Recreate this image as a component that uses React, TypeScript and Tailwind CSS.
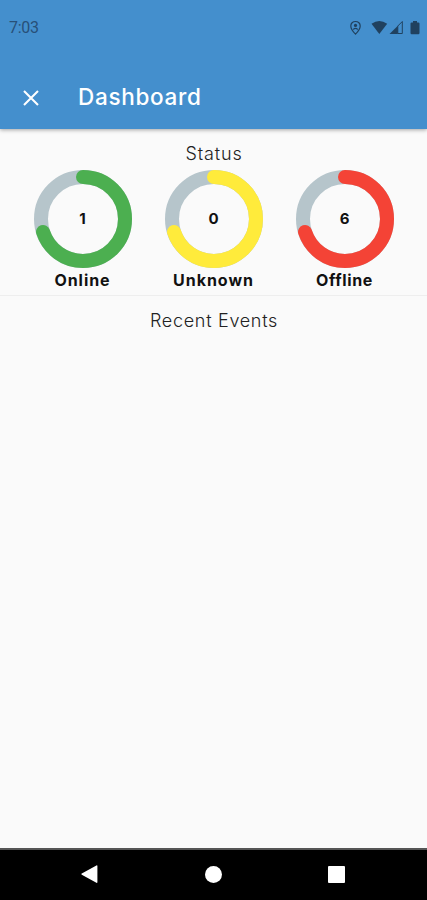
import type { ReactNode } from 'react';

type StatusRingProps = {
  label: string;
  count: number;
  percent: number;
  strokeClass: string;
  labelClass: string;
};

const StatusRing = (props: StatusRingProps) => (
  <div className="flex w-[131px] flex-col items-center">
    <div className="grid h-[98px] w-[98px] place-items-center">
      <svg className="col-start-1 row-start-1 -rotate-90" width="98" height="98">
        <circle
          className="stroke-[#b6c5cb]"
          cx="49"
          cy="49"
          r="42"
          fill="none"
          strokeWidth="14"
        />
        <circle
          className={props.strokeClass}
          cx="49"
          cy="49"
          r="42"
          fill="none"
          strokeWidth="14"
          strokeLinecap="round"
          pathLength={100}
          strokeDasharray={`${props.percent} 100`}
        />
      </svg>
      <span className="col-start-1 row-start-1 text-[15px] leading-5 font-bold text-[#111111]">
        {props.count}
      </span>
    </div>
    <span
      className={`mt-[2px] text-base leading-5 font-bold text-[#111111] ${props.labelClass}`}
    >
      {props.label}
    </span>
  </div>
);

const StatusBar = () => (
  <div className="flex h-14 items-center justify-between pr-[7px] pl-[9px] text-[#20415f]">
    <span className="font-[Roboto,sans-serif] text-base leading-5 tracking-[-0.3px] text-[#285078]">
      7:03
    </span>
    <svg width="72" height="18" viewBox="0 0 72 18" fill="currentColor">
      {/* Location */}
      <path
        d="M7.5 2.5C4.7 2.5 2.8 4.4 2.8 6.9C2.8 10.3 7.5 15.1 7.5 15.1S12.2 10.3 12.2 6.9C12.2 4.4 10.3 2.5 7.5 2.5Z"
        fill="none"
        stroke="currentColor"
        strokeWidth="1.2"
      />
      <circle cx="7.5" cy="6.4" r="1.6" />
      <path d="M4.9 10Q7.5 7.6 10.1 10L9.4 10.9Q7.5 9.2 5.6 10.9Z" />
      {/* Wifi */}
      <path d="M23.5 4.8Q31.3 -1 39.2 4.8L31.3 15Z" />
      {/* Signal */}
      <path d="M41.5 15L49.8 6.7V15Z" />
      <path
        d="M49.8 7L54.3 2.5V14.5H49.8Z"
        fill="none"
        stroke="currentColor"
        strokeWidth="1"
      />
      {/* Battery */}
      <path d="M65 2h4v1.4h1.3q1.2 0 1.2 1.2v9.4q0 1.2-1.2 1.2h-6.6q-1.2 0-1.2-1.2V4.6q0-1.2 1.2-1.2H65Z" />
    </svg>
  </div>
);

const AppBar = () => (
  <header className="z-10 h-[129px] shrink-0 bg-[#448fcd] shadow-[0_1px_4px_rgba(0,0,0,0.35)]">
    <StatusBar />
    <div className="flex h-[73px] items-center pt-[9px] pl-[22px]">
      <svg
        className="mt-[2px]"
        width="18"
        height="18"
        fill="none"
        stroke="white"
        strokeWidth="2.1"
      >
        <path d="M2 2L16 16M16 2L2 16" />
      </svg>
      <h1 className="ml-[38px] text-[22.5px] leading-7 font-medium tracking-[0.7px] text-white">
        Dashboard
      </h1>
    </div>
  </header>
);

const SectionTitle = (props: { children: ReactNode }) => (
  <h2 className="pl-px text-center text-[18px] leading-6 font-light text-[#222222]">
    {props.children}
  </h2>
);

const NavigationBar = () => (
  <nav className="flex h-[52px] shrink-0 items-center justify-between border-t-2 border-[#555555] bg-black pr-[82px] pb-[2px] pl-[81px]">
    <svg width="18" height="20" fill="white">
      <path d="M0.8 9.4Q-0.2 10.1 0.8 10.7L15.4 18.8Q16.4 19.3 16.4 18.1V2.1Q16.4 0.8 15.4 1.4Z" />
    </svg>
    <div className="h-[17px] w-[17px] rounded-full bg-white" />
    <div className="h-[17px] w-[17px] rounded-[1px] bg-white" />
  </nav>
);

const App = () => (
  <div className="flex h-[900px] w-[427px] flex-col overflow-hidden bg-[#fafafa] font-[Inter,sans-serif]">
    <AppBar />
    <main className="grow">
      <section className="h-[167px] border-b border-[#eeeeee] pt-[13px]">
        <SectionTitle>
          <span className="tracking-[0.85px]">Status</span>
        </SectionTitle>
        <div className="mt-1 flex justify-center">
          <StatusRing
            label="Online"
            count={1}
            percent={70}
            strokeClass="stroke-[#4caf50]"
            labelClass="tracking-[0.95px]"
          />
          <StatusRing
            label="Unknown"
            count={0}
            percent={70}
            strokeClass="stroke-[#ffeb3b]"
            labelClass="tracking-[1px]"
          />
          <StatusRing
            label="Offline"
            count={6}
            percent={70}
            strokeClass="stroke-[#f44336]"
            labelClass="tracking-[0.6px]"
          />
        </div>
      </section>
      <section className="pt-[13px]">
        <SectionTitle>
          <span className="tracking-[0.7px]">Recent Events</span>
        </SectionTitle>
      </section>
    </main>
    <NavigationBar />
  </div>
);

export default App;
